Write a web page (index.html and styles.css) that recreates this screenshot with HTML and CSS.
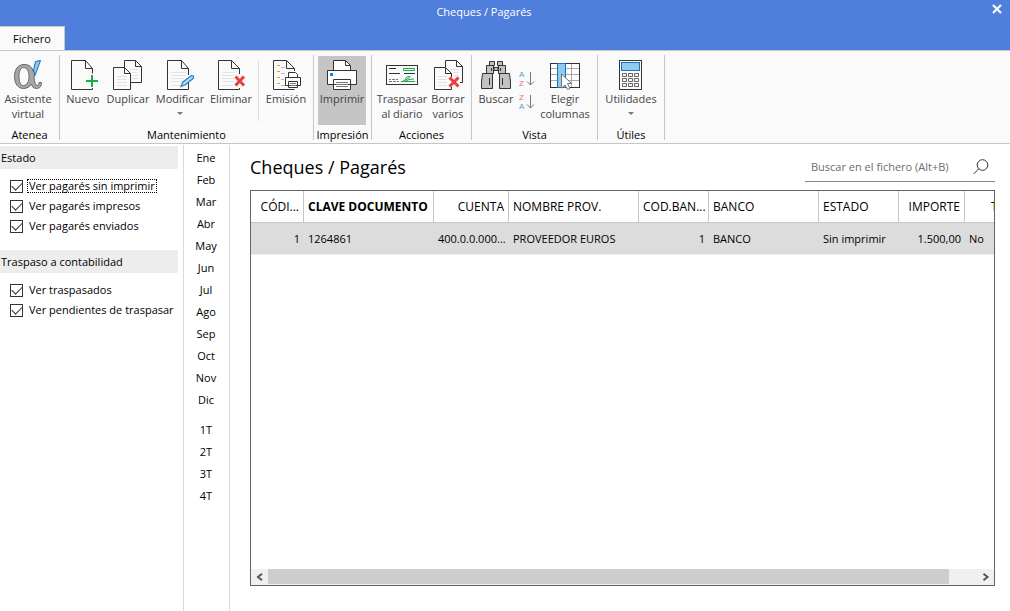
FILE: index.html
```html
<!DOCTYPE html>
<html lang="es">
<head>
<meta charset="utf-8">
<title>Cheques / Pagarés</title>
<link rel="stylesheet" href="styles.css">
</head>
<body>
<header class="titlebar">
  <div class="caption">
    <span class="caption-text">Cheques / Pagarés</span>
    <button class="close" aria-label="Cerrar"><svg width="10" height="10" viewBox="0 0 10 10"><path d="M1 1L9 9M9 1L1 9" stroke="#fff" stroke-width="2.2"/></svg></button>
  </div>
  <button class="tab">Fichero</button>
</header>

<div class="ribbon">
  <section class="group g-atenea">
    <div class="tools">
      <button class="tool w-56"><svg width="30" height="30" viewBox="0 0 30 30"><path fill="#a6a6a6" stroke="#686868" fill-rule="evenodd" d="M11 4.500C17 4.500 19.500 8 20 11.500L22.500 9.500C23 12 21.500 15 21 17C21.500 22 22.500 25.500 24 25.500C25.500 25.500 25.800 24 26 22.500H28.500C28.500 26 27 28.500 23.500 28.500C20.500 28.500 19 26.500 18.500 24C17 26.500 14 28.500 10.500 28.500C5 28.500 1.500 23.500 1.500 16.500C1.500 9.500 5 4.500 11 4.500ZM10.500 7.500C7.500 7.500 6 11 6 16.500C6 22 7.500 25.500 10.500 25.500C14 25.500 16 22 16 16.500C16 11 14 7.500 10.500 7.500Z"/><path fill="#8cc6ee" stroke="#1c6fae" d="M22.500 1.500L27.500 .5L22 15.500L20.500 10Z"/></svg><span>Asistente<br>virtual</span></button>
    </div>
    <h2>Atenea</h2>
  </section>
  <section class="group g-mant">
    <div class="tools">
      <button class="tool w-40"><svg class="ico" width="30" height="30" viewBox="0 0 30 30"><path d="M24.500 13.500V8.500L17.500 .5H3.500V29.500H24.500V28M17.500 .5V8.500H24.500"/><path class="plus" d="M18 21H30M24 15V27"/></svg><span>Nuevo</span></button>
      <button class="tool w-50"><svg class="ico" width="30" height="30" viewBox="0 0 30 30"><path d="M11.500 7V.5H22.500L28.500 6.500V22.500H17.500M22.500 .5V6.500H28.500M.5 7.500H11.500L17.500 13.500V29.500H.5ZM11.500 7.500V13.500H17.500"/><path class="faint" d="M4 16.500H14M4 19.500H14M4 22.500H14M4 25.500H14M17 9.500H25M19 12.500H25M19 15.500H25M19 18.500H25"/></svg><span>Duplicar</span></button>
      <button class="tool w-54"><svg class="ico" width="30" height="30" viewBox="0 0 30 30"><path class="faint" d="M6 12.500H20M6 15.500H20M6 18.500H19M6 21.500H17M6 25.500H15"/><path d="M23.500 15V8.500L16.500 .5H2.500V29.500H23.500V22M16.500 .5V8.500H23.500"/><path d="M16 26.500L18 22L26.500 15.500Q29.500 15.500 28 18.500L20 25Z" fill="#b7dcf5" stroke="#1f7fc2" stroke-width="1.200"/></svg><span>Modificar</span><i class="arrow"></i></button>
      <button class="tool w-48"><svg class="ico" width="30" height="30" viewBox="0 0 30 30"><path class="faint" d="M6 12.500H19M6 15.500H18M6 18.500H18M6 21.500H18M6 25.500H17"/><path d="M23.500 14V8.500L15.500 .5H2.500V29.500H23.500V28M15.500 .5V8.500H23.500"/><path class="cross" d="M19.500 16.500L28 25.500M28 16.500L19.500 25.500"/></svg><span>Eliminar</span></button>
      <div class="divider"></div>
      <button class="tool w-46"><svg class="ico" width="30" height="30" viewBox="0 0 30 30"><path d="M23.500 11V8.500L15.500 .5H2.500V29.500H23.500M15.500 .5V8.500H23.500"/><path d="M6 5.500H9M6 11.500H9M6 17.500H9M6 23.500H9" stroke="#e8a01c"/><path stroke="#bbb" d="M10 7.500H14M10 13.500H14M10 19.500H13M10 25.500H15"/><path fill="#fff" d="M17.500 17V12.500H24.500L26.500 14.500V17M14.500 17.500H29.500V25.500H14.500ZM17.500 21.500H26.500V27.500H17.500Z"/><path d="M19 23.500H25M19 25.500H25" stroke="#777"/></svg><span>Emisión</span></button>
    </div>
    <h2>Mantenimiento</h2>
  </section>
  <section class="group g-imp">
    <div class="tools">
      <button class="tool w-48 active"><svg class="ico" width="30" height="30" viewBox="0 0 30 30"><path fill="#fff" d="M6.500 10.500V.5H18.500L23.500 5.500V10.500M.5 10.500H29.500V24.500H.5ZM6.500 19.500H23.500V29.500H6.500Z"/><path fill="none" d="M18.500 .5V5.500H23.500"/><path d="M9 22.500H21M9 24.500H21M9 26.500H21" stroke="#777"/><rect x="3" y="13" width="3" height="3" fill="#1683d8" stroke="none"/></svg><span>Imprimir</span></button>
    </div>
    <h2>Impresión</h2>
  </section>
  <section class="group g-acc">
    <div class="tools">
      <button class="tool w-50"><svg class="ico" width="32" height="30" viewBox="0 0 32 30"><rect x=".5" y="5.500" width="31" height="19"/><path d="M3 8.500H10M3 13.500H14M18 13.500H29"/><path d="M3 19.500H5M6 19.500H9M10 19.500H12M3 21.500H6M7 21.500H10M11 21.500H13" stroke="#777"/><path stroke="#1cac55" d="M17.500 8.500H28.500V10.500H17.500ZM15 21.500H29M17 21Q24 18 24 16.500Q21 15.500 19 19.500Q20 22 23 19.500L28 19"/></svg><span>Traspasar<br>al diario</span></button>
      <button class="tool w-38"><svg class="ico" width="30" height="30" viewBox="0 0 30 30"><path d="M12.500 7V.5H23.500L29.500 6.500V22.500H27M23.500 .5V6.500H29.500M17 29.500H1.500V7.500H12.500L18.500 13.500V17M12.500 7.500V13.500H18.500M18.500 27V29.500H17"/><path class="faint" d="M5 16.500H14M5 19.500H14M5 22.500H14M5 25.500H14M18 9.500H26M20 12.500H26M21 15.500H26"/><path class="cross" d="M16.500 17.500L25.500 26.500M25.500 17.500L16.500 26.500"/></svg><span>Borrar<br>varios</span></button>
    </div>
    <h2>Acciones</h2>
  </section>
  <section class="group g-vista">
    <div class="tools">
      <button class="tool w-40"><svg class="ico bino" width="30" height="30" viewBox="0 0 30 30"><path d="M13 7.500H17V10.500H13ZM8.500 1.500H13.500V5.500H8.500ZM5.500 5.500H12.500V13.500H5.500ZM1.500 13.500H11.500V28.500H.5V22ZM16.500 1.500H21.500V5.500H16.500ZM17.500 5.500H24.500V13.500H17.500ZM18.500 13.500H28.500L29.500 22V28.500H18.500ZM10.500 8V11M19.500 8V11M8.500 18V25M21.500 18V25"/></svg><span>Buscar</span></button>
      <div class="sorts">
        <button class="sort" aria-label="Orden ascendente"><svg width="16" height="19" viewBox="0 0 16 19"><text x="0" y="8" fill="#4c9fd6">A</text><text x="0" y="17" fill="#e96a72">Z</text><path d="M11.500 3V16M8 12.500L11.500 16L15 12.500"/></svg></button>
        <button class="sort" aria-label="Orden descendente"><svg width="16" height="19" viewBox="0 0 16 19"><text x="0" y="8" fill="#e96a72">Z</text><text x="0" y="17" fill="#4c9fd6">A</text><path d="M11.500 3V16M8 12.500L11.500 16L15 12.500"/></svg></button>
      </div>
      <button class="tool w-54"><svg class="ico" width="30" height="30" viewBox="0 0 30 30"><rect x=".5" y="3.500" width="29" height="24" fill="#fff"/><path stroke="#aaa" d="M1 8.500H29M1 14.500H29M1 20.500H29M21.500 4V27"/><rect x=".5" y="3.500" width="29" height="24" fill="none"/><rect x="7.500" y="3.500" width="8" height="24" fill="#92c9ee" stroke="#1c72b4"/><path fill="#fff" stroke="#777" d="M11.500 14L21.500 23.500H17.500L20 28.500L17.500 29.500L15 25L11.500 28Z"/></svg><span>Elegir<br>columnas</span></button>
    </div>
    <h2>Vista</h2>
  </section>
  <section class="group g-util">
    <div class="tools">
      <button class="tool w-58"><svg class="ico" width="30" height="30" viewBox="0 0 30 30"><rect x="3.500" y=".5" width="22" height="29"/><rect x="5.500" y="2.500" width="18" height="8" fill="#92c9ee" stroke="#1c72b4"/><path stroke="#666" d="M6.500 13.500h4v3h-4zM12.500 13.500h4v3h-4zM18.500 13.500h4v3h-4zM6.500 18.500h4v3h-4zM12.500 18.500h4v3h-4zM18.500 18.500h4v3h-4zM6.500 23.500h4v3h-4zM12.500 23.500h4v3h-4zM18.500 23.500h4v3h-4z"/></svg><span>Utilidades</span><i class="arrow"></i></button>
    </div>
    <h2>Útiles</h2>
  </section>
</div>

<div class="workspace">
  <aside class="filters">
    <fieldset>
      <legend>Estado</legend>
      <label><input type="checkbox" checked><span class="focused">Ver pagarés sin imprimir</span></label>
      <label><input type="checkbox" checked><span>Ver pagarés impresos</span></label>
      <label><input type="checkbox" checked><span>Ver pagarés enviados</span></label>
    </fieldset>
    <fieldset>
      <legend>Traspaso a contabilidad</legend>
      <label><input type="checkbox" checked><span>Ver traspasados</span></label>
      <label><input type="checkbox" checked><span>Ver pendientes de traspasar</span></label>
    </fieldset>
  </aside>
  <nav class="periods">
    <div class="list"><button>Ene</button><button>Feb</button><button>Mar</button><button>Abr</button><button>May</button><button>Jun</button><button>Jul</button><button>Ago</button><button>Sep</button><button>Oct</button><button>Nov</button><button>Dic</button></div>
    <div class="list"><button>1T</button><button>2T</button><button>3T</button><button>4T</button></div>
  </nav>
  <main>
    <div class="head">
      <h1>Cheques / Pagarés</h1>
      <label class="search"><input type="text" placeholder="Buscar en el fichero (Alt+B)" aria-label="Buscar en el fichero"><svg width="16" height="16" viewBox="0 0 16 16"><circle cx="9.500" cy="6" r="5.300"/><path d="M5.800 9.700L.7 15"/></svg></label>
    </div>
    <div class="grid">
      <div class="view">
        <table>
          <colgroup><col class="c-53"><col class="c-130"><col class="c-75"><col class="c-130"><col class="c-70"><col class="c-110"><col class="c-80"><col class="c-66"><col class="c-80"></colgroup>
          <thead><tr><th class="num">CÓDI...</th><th class="sorted">CLAVE DOCUMENTO</th><th class="num">CUENTA</th><th>NOMBRE PROV.</th><th class="num">COD.BAN...</th><th>BANCO</th><th>ESTADO</th><th class="num">IMPORTE</th><th class="cut">T</th></tr></thead>
          <tbody><tr><td class="num">1</td><td>1264861</td><td class="num">400.0.0.000...</td><td>PROVEEDOR EUROS</td><td class="num">1</td><td>BANCO</td><td>Sin imprimir</td><td class="num">1.500,00</td><td>No</td></tr></tbody>
        </table>
      </div>
      <div class="scroll">
        <button aria-label="Izquierda"><svg width="8" height="8" viewBox="0 0 8 8"><path d="M6 .8L2 4L6 7.200"/></svg></button>
        <div class="track"><div class="thumb"></div></div>
        <button aria-label="Derecha"><svg width="8" height="8" viewBox="0 0 8 8"><path d="M1.500 .8L5.500 4L1.500 7.200"/></svg></button>
      </div>
    </div>
  </main>
</div>
</body>
</html>
```
FILE: styles.css
```css
* { box-sizing: border-box; }
body {
  margin: 0;
  min-height: 100vh;
  display: flex;
  flex-direction: column;
  background: #fff;
  color: #000;
  font: 11px/15px "Open Sans", "Noto Sans", sans-serif;
}
button {
  padding: 0;
  border: 0;
  background: none;
  color: inherit;
  font: inherit;
}
h1, h2 { margin: 0; font-weight: 400; }
svg { display: block; flex: none; }

.titlebar { background: #4f7edc; }
.caption {
  display: grid;
  grid-template-columns: 40px 1fr 40px;
  height: 26px;
  padding-right: 8px;
}
.caption-text { grid-column: 2; padding: 4px 34px 0 0; text-align: center; color: #fff; }
.close { justify-self: end; align-self: start; padding-top: 4px; }
.tab {
  display: block;
  width: 65px;
  height: 24px;
  background: #fafafa;
  border: solid #c6c6c6;
  border-width: 1px 1px 0 0;
}

.ribbon {
  display: flex;
  height: 94px;
  padding: 4px 0 3px;
  background: #fafafa;
  border-top: 1px solid #c6c6c6;
  border-bottom: 1px solid #c6c6c6;
}
.group {
  display: flex;
  flex-direction: column;
  justify-content: space-between;
  flex: none;
  border-right: 1px solid #c6c6c6;
}
.group h2 { font-size: 11px; line-height: 11px; text-align: center; white-space: nowrap; }
.tools { display: flex; height: 70px; padding-top: 1px; }
.g-atenea { width: 60px; }
.g-mant { width: 254px; }
.g-mant .tools { padding-left: 3px; }
.g-imp { width: 58px; }
.g-imp .tools { padding-left: 4px; }
.g-acc { width: 100px; }
.g-acc .tools { padding-left: 5px; gap: 2px; }
.g-vista { width: 126px; }
.g-vista .tools { padding-left: 4px; }
.g-util { width: 67px; }
.g-util .tools { padding-left: 4px; }
.tool {
  display: flex;
  flex-direction: column;
  align-items: center;
  flex: none;
  gap: 1px;
  padding-top: 4px;
  color: #444;
  white-space: nowrap;
}
.tool.active { background: #c5c5c5; }
.w-38 { width: 38px; }
.w-40 { width: 40px; }
.w-46 { width: 46px; }
.w-48 { width: 48px; }
.w-50 { width: 50px; }
.w-54 { width: 54px; }
.w-56 { width: 56px; }
.w-58 { width: 58px; }
.divider { width: 1px; height: 60px; margin: 5px 4px 0 3px; background: #dcdcdc; }
.arrow { margin-top: 5px; border: solid transparent; border-width: 3px 3px 0; border-top-color: #777; }
.ico { fill: none; stroke: #333; }
.ico .faint { stroke: #e2e2e2; }
.ico .plus { stroke: #1aab4b; stroke-width: 2; }
.ico .cross { stroke: #e93f3a; stroke-width: 3; }
.bino { fill: #c4c2c0; }
.sorts { display: flex; flex-direction: column; gap: 4px; width: 22px; padding: 13px 0 0 3px; }
.sort svg { fill: none; stroke: #777; }
.sort text { font: 8px "Liberation Sans", sans-serif; stroke: none; }

.workspace { flex: 1; display: flex; padding-top: 1px; }
.filters { width: 183px; flex: none; padding: 1px 5px 0 0; }
fieldset { min-width: 0; margin: 0 0 14px; padding: 0 0 0 10px; border: 0; }
legend {
  float: left;
  width: calc(100% + 10px);
  height: 23px;
  margin: 0 0 7px -10px;
  padding: 4px 1px;
  background: #ededed;
}
fieldset label { display: flex; clear: both; align-items: center; gap: 4px; height: 20px; white-space: nowrap; }
fieldset span { padding: 0 1px; border: 1px solid transparent; line-height: 12px; }
fieldset .focused { border: 1px dotted #000; }
fieldset input {
  appearance: none;
  width: 13px;
  height: 13px;
  margin: 0;
  border: 1px solid #333;
  display: grid;
  place-items: center;
}
fieldset input:checked::before {
  content: "";
  width: 9px;
  height: 5px;
  border: solid #333;
  border-width: 0 0 1px 1px;
  transform: translateY(-1px) rotate(-45deg);
}
.periods {
  display: flex;
  flex-direction: column;
  gap: 8px;
  width: 47px;
  flex: none;
  padding-top: 1px;
  border: solid #d9d9d9;
  border-width: 0 1px;
}
.list { display: flex; flex-direction: column; }
.list button { height: 22px; padding-right: 1px; }

main { flex: 1; min-width: 0; display: flex; flex-direction: column; padding: 8px 15px 25px 20px; }
.head { display: flex; justify-content: space-between; align-items: flex-start; height: 37px; }
h1 { font-size: 18px; line-height: 28px; }
.search {
  display: flex;
  align-items: center;
  width: 190px;
  height: 29px;
  padding: 0 6px;
  border-bottom: 1px solid #888;
}
.search input { flex: 1; min-width: 0; padding: 0 0 2px; border: 0; outline: 0; background: none; font: inherit; }
.search input::placeholder { color: #6d6d6d; opacity: 1; }
.search svg { fill: none; stroke: #333; }
.grid { flex: 1; display: flex; flex-direction: column; border: 1px solid #646464; }
.view { flex: 1; overflow: hidden; }
table { width: 794px; table-layout: fixed; border-collapse: separate; border-spacing: 0; line-height: 16px; }
.c-53 { width: 53px; }
.c-66 { width: 66px; }
.c-70 { width: 70px; }
.c-75 { width: 75px; }
.c-80 { width: 80px; }
.c-110 { width: 110px; }
.c-130 { width: 130px; }
th, td { height: 32px; padding: 0 4px; text-align: left; font-weight: 400; white-space: nowrap; }
th { font-size: 12px; border: solid #c6c6c6; border-width: 0 1px 1px 0; }
td { font-size: 11px; background: #dcdcdc; border-bottom: 1px solid #ececec; }
.num { text-align: right; }
th.sorted { font-weight: 700; }
th.cut { padding-left: 26px; }
.scroll { display: flex; height: 16px; background: #f0f0f0; }
.scroll button { display: grid; place-items: center; width: 17px; }
.scroll svg { fill: none; stroke: #555; stroke-width: 2; }
.track { flex: 1; display: flex; }
.thumb { width: 96%; background: #cdcdcd; height: 15px; }
```
